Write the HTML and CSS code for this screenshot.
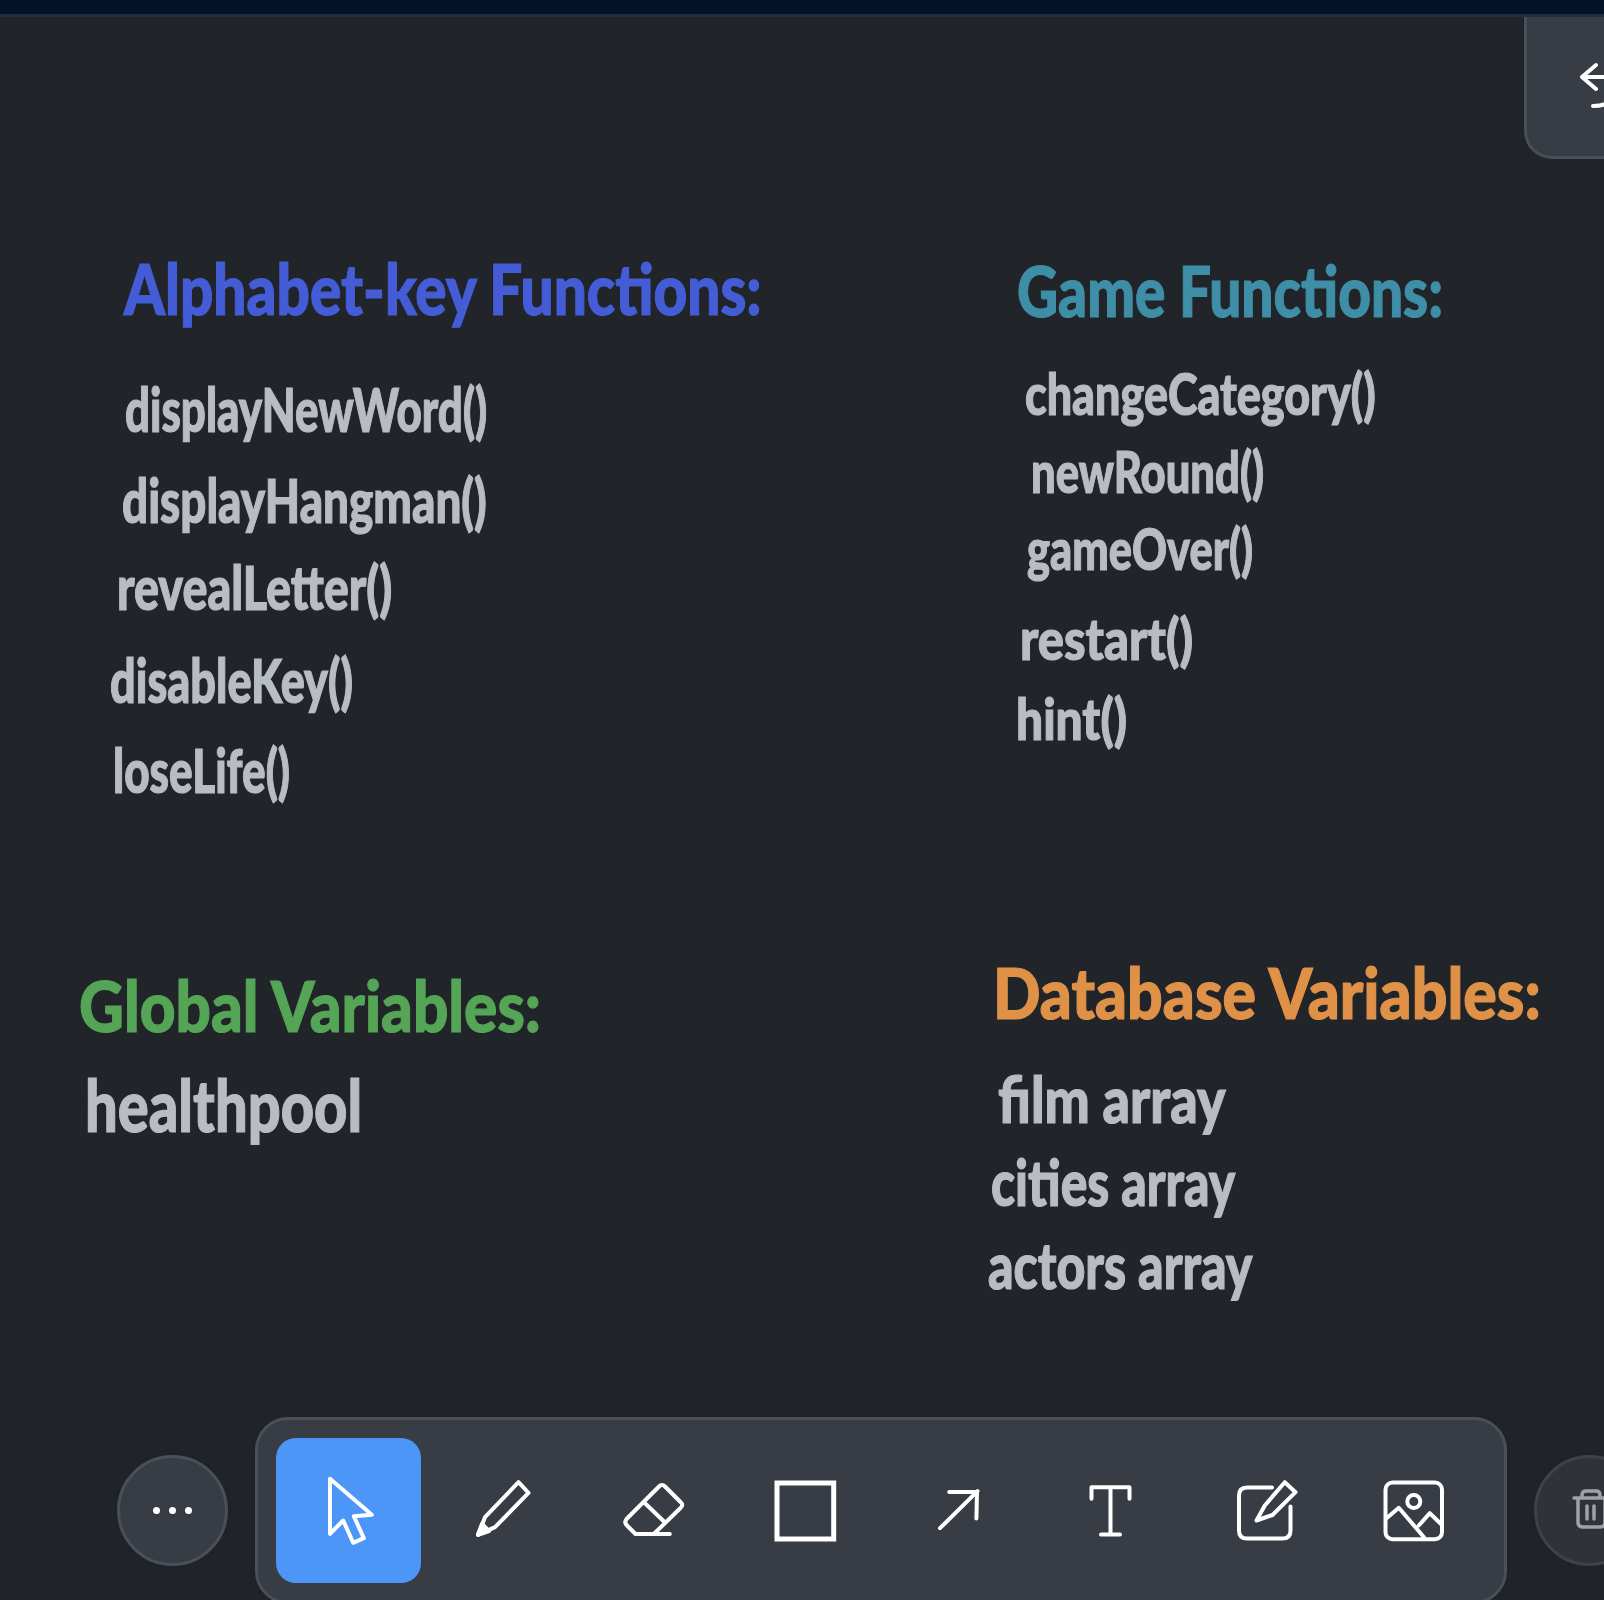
FILE: index.html
```html
<!DOCTYPE html>
<html lang="en">
<head>
    <meta charset="UTF-8">
    <title>Whiteboard</title>
    <link rel="stylesheet" href="styles.css">
</head>
<body>
    <div class="topbar"></div>

    <main class="board">
        <div class="label heading blue alpha">Alphabet-key Functions:</div>
        <div class="label item-l i1">displayNewWord()</div>
        <div class="label item-l i2">displayHangman()</div>
        <div class="label item-l i3">revealLetter()</div>
        <div class="label item-l i4">disableKey()</div>
        <div class="label item-l i5">loseLife()</div>

        <div class="label heading teal game">Game Functions:</div>
        <div class="label item-r g1">changeCategory()</div>
        <div class="label item-r g2">newRound()</div>
        <div class="label item-r g3">gameOver()</div>
        <div class="label item-r g4">restart()</div>
        <div class="label item-r g5">hint()</div>

        <div class="label heading green global">Global Variables:</div>
        <div class="label big health">healthpool</div>

        <div class="label heading orange database">Database Variables:</div>
        <div class="label item-b d1">film array</div>
        <div class="label item-b d2">cities array</div>
        <div class="label item-b d3">actors array</div>

        <div class="undo-panel">
            <svg class="undo-icon" width="40" height="60" viewBox="0 0 40 60">
                <path d="M17 6 L3 18 L17 30 M3 18 L24 18 C32 18 36 22 36 30 C36 40 30 47 14 47"/>
            </svg>
        </div>
    </main>

    <div class="dock">
        <button class="round-btn">
            <span class="dot"></span><span class="dot"></span><span class="dot"></span>
        </button>

        <div class="toolbar">
            <button class="tool active">
                <svg class="icon" viewBox="0 0 72 72"><path d="M17 3.8 L58.8 39.8 L40.8 41.2 L50.8 63.2 L40.2 67.8 L30.2 45.5 L17 58.8 Z"/></svg>
            </button>
            <button class="tool">
                <svg class="icon" viewBox="0 0 72 72"><path d="M13 59.8 L20 42.2 L53.5 7.2 L63.5 17.8 L30 52.2 Z"/><path class="solid" d="M13 59.8 L17 49 L24 56 Z"/></svg>
            </button>
            <button class="tool">
                <svg class="icon" viewBox="0 0 72 72"><path d="M18.5 59 L52.8 59 M36.8 59 L63.5 33 Q67 30 63.5 27 L48 11.5 Q45 8.5 42 11.5 L10 43.5 Q6.5 47 10 50.5 L18.5 59 M28.5 28.8 L47.8 47.2"/></svg>
            </button>
            <button class="tool">
                <svg class="icon" viewBox="0 0 72 72"><rect class="thick" x="8" y="8" width="56.7" height="56"/></svg>
            </button>
            <button class="tool">
                <svg class="icon" viewBox="0 0 72 72"><path d="M19 53.2 L56.5 16.2 M28.2 17 L56 17 L55.4 43.5"/></svg>
            </button>
            <button class="tool">
                <svg class="icon" viewBox="0 0 72 72"><path d="M18.5 23.8 L18.5 12.2 L56.5 12.2 L56.5 23.8 M37.5 12.2 L37.5 59.5 M28 59.5 L47 59.5"/></svg>
            </button>
            <button class="tool">
                <svg class="icon" viewBox="0 0 72 72"><path d="M47 12.5 L22 12.5 Q14 12.5 14 20.5 L14 55.5 Q14 63.5 22 63.5 L57.5 63.5 Q65.5 63.5 65.5 55.5 L65.5 31.5"/><path d="M31.5 45.5 L39.8 30.5 L59.8 7.2 L70.5 17.2 L47.5 40 Z"/></svg>
            </button>
            <button class="tool">
                <svg class="icon" viewBox="0 0 72 72"><rect x="8.5" y="7.5" width="56.5" height="56.7" rx="7"/><circle cx="36.8" cy="26.5" r="6.5"/><path d="M9 43.8 L21.8 32.8 L46.8 62 M41.8 50.5 L52.8 38.2 L64.5 49.5"/></svg>
            </button>
        </div>

        <button class="round-btn trash">
            <svg class="trash-icon" width="40" height="44" viewBox="0 0 40 44">
                <path d="M2 9 L38 9 M6 9 L6 33 Q6 38 11 38 L28 38 Q33 38 33 33 L33 9 M10 9 L10 6 Q10 2 14 2 L24 2 Q28 2 28 6 L28 9 M15 17 L15 30 M22 17 L22 30"/>
            </svg>
        </button>
    </div>
</body>
</html>
```

FILE: styles.css
```css
* {
    margin: 0;
    padding: 0;
    box-sizing: border-box;
}

html, body {
    height: 1600px;
    overflow: hidden;
}

body {
    display: flex;
    flex-direction: column;
    background: #212529;
    font-family: 'Lato', 'Liberation Sans', sans-serif;
}

.topbar {
    flex: none;
    height: 17px;
    background: #021426;
    border-bottom: 3px solid #1e2f45;
}

.board {
    flex: none;
    position: relative;
    height: 1400px;
}

/* text sits where it was dropped on the board, squeezed to its hand-drawn width */
.label {
    position: absolute;
    left: var(--x);
    top: var(--y);
    font-weight: 900;
    line-height: 1;
    white-space: nowrap;
    color: #b8bdc2;
    -webkit-text-stroke: 1.2px currentColor;
    transform-origin: left top;
    transform: scaleX(var(--fit));
}

.heading { font-size: 70px; }
.item-l { font-size: 60px; }
.item-r { font-size: 58px; }
.item-b { font-size: 64px; }
.big { font-size: 72px; }

.blue { color: #445dd7; }
.teal { color: #3f8ea8; }
.green { color: #55a556; }
.orange { color: #e09148; }

.alpha { --x: 124px; --y: 236px; --fit: 0.836; }
.i1 { --x: 125px; --y: 362px; --fit: 0.731; }
.i2 { --x: 122px; --y: 453px; --fit: 0.763; }
.i3 { --x: 117px; --y: 540px; --fit: 0.777; }
.i4 { --x: 110px; --y: 633px; --fit: 0.75; }
.i5 { --x: 113px; --y: 723px; --fit: 0.734; }

.game { --x: 1017px; --y: 238px; --fit: 0.811; }
.g1 { --x: 1025px; --y: 347px; --fit: 0.773; }
.g2 { --x: 1031px; --y: 425px; --fit: 0.751; }
.g3 { --x: 1027px; --y: 502px; --fit: 0.747; }
.g4 { --x: 1020px; --y: 592px; --fit: 0.842; }
.g5 { --x: 1016px; --y: 672px; --fit: 0.825; }

.global { --x: 79px; --y: 953px; --fit: 0.887; }
.health { --x: 85px; --y: 1051px; --fit: 0.803; }

.database { --x: 993px; --y: 940px; --fit: 0.894; }
.d1 { --x: 998px; --y: 1050px; --fit: 0.839; }
.d2 { --x: 991px; --y: 1133px; --fit: 0.778; }
.d3 { --x: 988px; --y: 1216px; --fit: 0.781; }

.undo-panel {
    position: absolute;
    top: 0;
    left: 1524px;
    width: 120px;
    height: 142px;
    background: #383c44;
    border: 3px solid #495057;
    border-top: none;
    border-radius: 0 0 0 28px;
}

.undo-icon {
    position: absolute;
    left: 52px;
    top: 42px;
    fill: none;
    stroke: #fff;
    stroke-width: 4;
    stroke-linecap: round;
    stroke-linejoin: round;
}

.dock {
    flex: none;
    display: flex;
    align-items: center;
    gap: 27px;
    padding-left: 117px;
    height: 187px;
}

.round-btn {
    flex: none;
    width: 111px;
    height: 111px;
    display: flex;
    align-items: center;
    justify-content: center;
    gap: 9px;
    border-radius: 50%;
    background: #383c44;
    border: 3px solid #495057;
    box-shadow: 0 0 14px rgba(0, 0, 0, 0.1);
}

.dot {
    width: 7px;
    height: 7px;
    border-radius: 50%;
    background: #fff;
}

.trash {
    justify-content: flex-start;
    padding-left: 35px;
    background: #2f3339;
    border-color: #3d434c;
}

.trash-icon {
    flex: none;
    fill: none;
    stroke: #9ea2a6;
    stroke-width: 3.5;
    stroke-linecap: round;
    stroke-linejoin: round;
}

.toolbar {
    flex: none;
    display: flex;
    gap: 7px;
    height: 187px;
    padding: 18px 19px 18px 18px;
    background: #383c44;
    border: 3px solid #495057;
    border-radius: 33px;
    box-shadow: 0 0 14px rgba(0, 0, 0, 0.1);
}

.tool {
    flex: none;
    width: 145px;
    height: 145px;
    display: flex;
    align-items: center;
    justify-content: center;
    background: none;
    border: none;
    border-radius: 20px;
}

.tool.active {
    background: #4c96f8;
}

.icon {
    width: 72px;
    height: 72px;
    overflow: visible;
    fill: none;
    stroke: #fff;
    stroke-width: 4;
    stroke-linecap: round;
    stroke-linejoin: round;
}

.icon .solid {
    fill: #fff;
}

.icon .thick {
    stroke-width: 5;
    stroke-linejoin: miter;
}
```
